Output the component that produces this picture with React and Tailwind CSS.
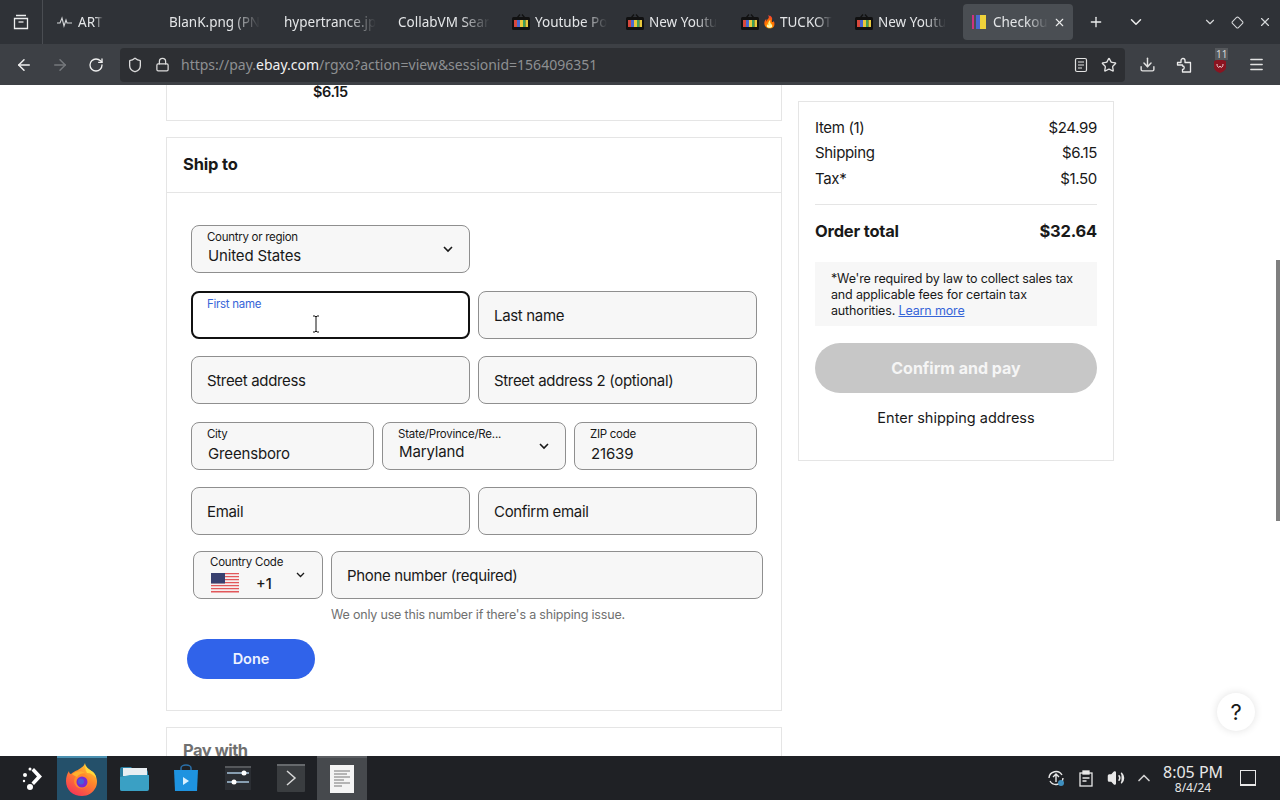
import React from "react";
import { ArrowLeft, ArrowRight, RotateCw, Shield, Lock, Star, Download, Menu, X, Plus, ChevronDown, Diamond, Volume2, ChevronUp } from "lucide-react";

const TV = () => (
  <svg width="18" height="17" viewBox="0 0 18 17" className="shrink-0">
    <path d="M5 4 L8 0.5 M13 4 L10 0.5" stroke="#111" strokeWidth="1.2" />
    <rect x="0" y="3" width="18" height="13" rx="1.5" fill="#111" />
    <rect x="2" y="6" width="3" height="7" fill="#d8483c" />
    <rect x="5" y="6" width="3" height="7" fill="#4a68d0" />
    <rect x="8" y="6" width="3" height="7" fill="#e9c93c" />
    <rect x="11" y="6" width="2.5" height="7" fill="#3fa05a" />
    <rect x="13.5" y="6" width="2.5" height="7" fill="#e9c93c" />
  </svg>
);

const Tab = ({ w, icon, text, pl = "pl-0" }) => (
  <div className={`h-9 shrink-0 flex items-center ${w}`}>
    <div className={`h-full flex items-center gap-[5px] ${pl}`}>
      {icon}
      <span className="whitespace-nowrap text-[13.5px] text-[#e4e6e8] [mask-image:linear-gradient(to_right,black_68%,transparent_100%)]">{text}</span>
    </div>
  </div>
);

const Field = ({ label, value, className = "", chevron, active, valueTop = "top-[20px]" }) => (
  <div className={`relative h-12 rounded-lg shrink-0 ${active ? "bg-white border-2 border-[#111]" : "bg-[#f7f7f7] border border-[#8f8f8f]"} ${className}`}>
    {value !== undefined || active ? (
      <>
        <div className={`absolute top-[4px] text-[11.5px] leading-[14px] tracking-[-0.025em] whitespace-nowrap ${active ? "left-[14px] top-[3px] text-[#3665d8]" : "left-[15px] text-[#191919]"}`}>{label}</div>
        {value && <div className={`absolute left-4 ${valueTop} text-[15px] leading-5 tracking-[-0.01em] text-[#191919] whitespace-nowrap`}>{value}</div>}
      </>
    ) : (
      <div className="h-full flex items-center pl-[15px] pt-[2px] text-[15px] tracking-[-0.022em] text-[#191919] whitespace-nowrap">{label}</div>
    )}
    {chevron && (
      <svg width="10" height="7" viewBox="0 0 10 7" className="absolute right-[16px] top-[20px]" fill="none" stroke="#191919" strokeWidth="1.6"><path d="M1 1l4 4 4-4" /></svg>
    )}
  </div>
);

const Row = ({ a, b }) => (
  <div className="flex justify-between text-[15px] leading-[25.5px] tracking-[-0.022em] text-[#191919]">
    <span>{a}</span>
    <span>{b}</span>
  </div>
);

const Flag = () => (
  <svg width="28" height="20" viewBox="0 0 28 20">
    {[...Array(7)].map((_, i) => <rect key={i} y={i * 3} width="28" height="1.5" fill="#e2575a" />)}
    {[...Array(6)].map((_, i) => <rect key={i} y={i * 3 + 1.5} width="28" height="1.5" fill="#f5eeee" />)}
    <rect width="14" height="10.5" fill="#38406f" />
  </svg>
);

const Firefox = () => (
  <svg width="32" height="33" viewBox="0 0 32 33">
    <defs>
      <linearGradient id="ff" x1="0.8" y1="0" x2="0.2" y2="1">
        <stop offset="0" stopColor="#ffd23a" />
        <stop offset="0.4" stopColor="#ff8a2a" />
        <stop offset="1" stopColor="#f5305a" />
      </linearGradient>
    </defs>
    <path d="M19 0c0 4 4 6 8 9 4 4 5 10 3 15-3 6-8 9-14 9C7 33 0 27 0 18c0-4 1-7 3-10 0 2 1 3 2 3 2-2 4-3 7-4 2-2 6-3 7-7z" fill="url(#ff)" />
    <path d="M19 0c0 4 4 6 8 9 2 2 3 4 3 6-2-3-5-5-9-5-2-3-2-7-2-10z" fill="#ffd83a" />
    <circle cx="15.5" cy="18" r="7.5" fill="#ff8a2a" />
    <circle cx="16" cy="19" r="5.5" fill="#7a2bd0" />
    <circle cx="15" cy="18.5" r="3" fill="#4a5fd8" />
    <path d="M6 11c4-3 9-4 13-1-3 0-6 1-8 4-2-1-4-2-5-3z" fill="#ffb02e" />
  </svg>
);

export default function App() {
  return (
    <div className="h-screen w-full overflow-hidden flex flex-col bg-white font-['Inter',sans-serif]">
      {/* Tab strip */}
      <div className="h-11 shrink-0 bg-[#2f3237] flex items-center font-['Noto_Sans',sans-serif]">
        <div className="w-[43px] h-full shrink-0 flex items-center justify-center border-r border-[#4a4d52]">
          <svg width="16" height="16" viewBox="0 0 16 16" fill="none" stroke="#eceded" strokeWidth="1.3"><path d="M3 1.5h10M1.5 4.5h13v10h-13z" /><path d="M5.5 8h5" /></svg>
        </div>
        <div className="flex items-center pl-[13px]">
          <Tab w="w-[113px]" pl="pl-[1px]" text="ART" icon={<svg width="16" height="12" viewBox="0 0 16 12" fill="none" stroke="#d5d7d9" strokeWidth="1.1"><path d="M0 7h3l2-5 2 8 2-6 1 3h5" /></svg>} />
          <Tab w="w-[115px]" text="BlanK.png (PN" />
          <Tab w="w-[114px]" text="hypertrance.jp" />
          <Tab w="w-[114px]" text="CollabVM Sear" />
          <Tab w="w-[114px]" icon={<TV />} text="Youtube Po" />
          <Tab w="w-[115px]" icon={<TV />} text="New Youtu" />
          <Tab w="w-[114px]" icon={<><TV /><span className="text-[12px] -ml-[2px] -mr-[2px]">🔥</span></>} text="TUCKOT" />
          <Tab w="w-[108px]" icon={<TV />} text="New Youtu" />
          <div className="w-[110px] h-9 shrink-0 rounded-[4px] bg-[#4a4e53] flex items-center pl-[9px] pr-[9px] gap-[5px]">
            <svg width="16" height="16" viewBox="0 0 16 16" className="shrink-0">
              <rect x="0" y="1" width="2" height="14" fill="#d0327f" />
              <rect x="4" y="1" width="4" height="14" fill="#4a68d0" />
              <rect x="8" y="1" width="6" height="14" fill="#efd23a" />
            </svg>
            <span className="flex-1 whitespace-nowrap text-[13.5px] text-[#e4e6e8] [mask-image:linear-gradient(to_right,black_60%,transparent_100%)]">Checkou</span>
            <X size={13} color="#eceded" className="shrink-0" />
          </div>
          <Plus size={16} color="#eceded" className="ml-[15px] shrink-0" />
          <ChevronDown size={18} color="#eceded" className="ml-[23px] shrink-0" />
        </div>
        <div className="ml-auto flex items-center gap-[14px] pr-[8px]">
          <ChevronDown size={14} color="#d5d7d9" />
          <Diamond size={13} color="#d5d7d9" />
          <X size={14} color="#d5d7d9" />
        </div>
      </div>

      {/* Nav bar */}
      <div className="h-[41px] shrink-0 bg-[#3d4045] flex items-center font-['Noto_Sans',sans-serif]">
        <div className="w-[120px] shrink-0 flex items-center pl-[15px] gap-[18px]">
          <ArrowLeft size={18} color="#f0f0f0" />
          <ArrowRight size={18} color="#75787c" />
          <RotateCw size={16} color="#f0f0f0" className="ml-[1px]" />
        </div>
        <div className="w-[1005px] h-[34px] shrink-0 bg-[#2d2f33] rounded-[4px] flex items-center pl-[7px] pr-[8px]">
          <Shield size={16} color="#dcdcdc" />
          <Lock size={15} color="#dcdcdc" className="ml-[12px]" />
          <span className="ml-[11px] text-[14px] text-[#8d8f92] whitespace-nowrap">https://pay.<span className="text-[#f0f0f0]">ebay.com</span>/rgxo?action=view&amp;sessionid=1564096351</span>
          <div className="ml-auto flex items-center gap-[13px]">
            <svg width="14" height="16" viewBox="0 0 14 16" fill="none" stroke="#e2e2e2" strokeWidth="1.2"><rect x="1.5" y="1.5" width="11" height="13" rx="1.5" /><path d="M4 5h6M4 8h6M4 11h4" /></svg>
            <Star size={16} color="#e2e2e2" />
          </div>
        </div>
        <div className="flex items-center pl-[14px]">
          <Download size={17} color="#e2e2e2" />
          <svg width="16" height="17" viewBox="0 0 16 17" fill="none" stroke="#ececec" strokeWidth="1.3" strokeLinejoin="round" className="ml-[20px]">
            <path d="M1.5 6.5h3.5V4.5a2 2 0 014 0v2h5.5v9.5h-8v-2.5a1.7 1.7 0 000-3.5v-1H1.5z" />
          </svg>
          <div className="relative w-4 h-4 ml-[20px] mt-[2px]">
            <svg width="16" height="16" viewBox="0 0 16 16"><path d="M8 1l6 2v6c0 3-3 5-6 6-3-1-6-3-6-6V3z" fill="#8a1420" /><path d="M5 6c0 4 2.500 4 3 2 .5 2 3 2 3-2" fill="none" stroke="#f0d8d8" strokeWidth="1" /></svg>
            <span className="absolute -top-[10px] left-[3px] text-[10px] leading-3 text-[#d8d8d8] bg-[#55585c] px-[1px]">11</span>
          </div>
          <Menu size={17} color="#e2e2e2" className="ml-[20px]" />
        </div>
      </div>

      {/* Page */}
      <div className="relative flex-1 min-h-0 overflow-hidden flex items-start pl-[166px] gap-4 bg-white">
        <div className="w-[616px] shrink-0">
          <div className="h-[36px] border border-t-0 border-[#e5e5e5] pl-[146px] text-[14.5px] font-semibold leading-[14px] tracking-[-0.03em] text-[#191919]">$6.15</div>
          <div className="mt-4 h-[574px] border border-[#e5e5e5]">
            <div className="h-[55px] flex items-center pl-4 pb-[2px] border-b border-[#e5e5e5] text-[16.5px] font-bold tracking-[-0.01em] text-[#191919]">Ship to</div>
            <div className="pl-[24px] pt-[32px]">
              <Field className="w-[279px]" label="Country or region" value="United States" valueTop="top-[20px]" chevron />
              <div className="mt-[18px] flex gap-2">
                <Field className="w-[279px]" label="First name" active />
                <Field className="w-[279px]" label="Last name" />
              </div>
              <div className="mt-[17px] flex gap-2">
                <Field className="w-[279px]" label="Street address" />
                <Field className="w-[279px]" label="Street address 2 (optional)" />
              </div>
              <div className="mt-[18px] flex gap-2">
                <Field className="w-[183px]" label="City" value="Greensboro" valueTop="top-[21px]" />
                <div className="relative h-12 w-[184px] shrink-0 rounded-lg bg-[#f7f7f7] border border-[#8f8f8f]">
                  <div className="absolute left-[15px] top-[4px] text-[11.5px] leading-[14px] tracking-[-0.02em] text-[#191919]">State/Province/Re...</div>
                  <div className="absolute left-4 top-[19px] text-[15px] leading-5 tracking-[-0.01em] text-[#191919]">Maryland</div>
                  <svg width="10" height="7" viewBox="0 0 10 7" className="absolute right-[16px] top-[20px]" fill="none" stroke="#191919" strokeWidth="1.6"><path d="M1 1l4 4 4-4" /></svg>
                </div>
                <Field className="w-[183px]" label="ZIP code" value="21639" valueTop="top-[21px]" />
              </div>
              <div className="mt-[17px] flex gap-2">
                <Field className="w-[279px]" label="Email" />
                <Field className="w-[279px]" label="Confirm email" />
              </div>
              <div className="mt-4 ml-[2px] flex gap-2">
                <div className="relative h-12 w-[130px] shrink-0 rounded-lg bg-[#f7f7f7] border border-[#8f8f8f]">
                  <div className="absolute left-4 top-[3px] text-[11.5px] leading-[14px] tracking-[-0.02em] text-[#191919]">Country Code</div>
                  <div className="absolute left-[17px] top-[21px]"><Flag /></div>
                  <div className="absolute left-[62px] top-[22px] text-[14.5px] leading-5 font-medium text-[#191919]">+1</div>
                  <svg width="9" height="6" viewBox="0 0 9 6" className="absolute right-[17px] top-[20px]" fill="none" stroke="#191919" strokeWidth="1.3"><path d="M1 1l3.500 3.500L8 1" /></svg>
                </div>
                <Field className="w-[432px]" label="Phone number (required)" />
              </div>
              <div className="mt-[8px] ml-[140px] text-[12.5px] leading-4 tracking-[-0.015em] text-[#707070]">We only use this number if there's a shipping issue.</div>
              <div className="mt-4 -ml-[4px] w-32 h-10 rounded-full bg-[#3063ea] flex items-center justify-center text-[14.5px] font-semibold text-[#eef2ff]">Done</div>
            </div>
          </div>
          <div className="mt-4 h-[60px] border border-[#e5e5e5] pl-4 pt-[12px] text-[16.5px] font-bold leading-5 tracking-[-0.03em] text-[#707070]">Pay with</div>
        </div>

        <div className="mt-4 w-[316px] h-[360px] shrink-0 border border-[#e5e5e5] p-4 pt-[12.5px]">
          <Row a="Item (1)" b="$24.99" />
          <Row a="Shipping" b="$6.15" />
          <Row a="Tax*" b="$1.50" />
          <div className="mt-[13px] border-t border-[#e5e5e5]" />
          <div className="mt-[14px] flex justify-between text-[16.5px] leading-6 font-bold tracking-[-0.012em] text-[#191919]">
            <span>Order total</span>
            <span>$32.64</span>
          </div>
          <div className="mt-[19px] h-[64px] bg-[#f7f7f7] pl-4 pr-2 pt-[9px] text-[12.5px] leading-4 tracking-[-0.012em] text-[#191919]">
            *We're required by law to collect sales tax and applicable fees for certain tax authorities. <span className="text-[#3665d8] underline">Learn more</span>
          </div>
          <div className="mt-[17px] h-[50px] rounded-full bg-[#c7c7c7] flex items-center justify-center text-[16px] font-bold text-[#f5f5f5]">Confirm and pay</div>
          <div className="mt-[15px] text-center text-[14.5px] leading-5 text-[#191919]">Enter shipping address</div>
        </div>

        {/* text cursor */}
        <svg width="8" height="18" viewBox="0 0 8 18" className="absolute left-[312px] top-[230px]" fill="none" stroke="#111" strokeWidth="1"><path d="M1 1h2l1 1 1-1h2M4 2v14M1 17h2l1-1 1 1h2" /></svg>
        {/* scrollbar thumb */}
        <div className="absolute right-0 top-[175px] w-[4px] h-[261px] bg-[#7f7f7f]" />
        {/* help */}
        <div className="absolute left-[1217px] top-[608px] w-[38px] h-[38px] rounded-full bg-white shadow-[0_0_8px_rgba(0,0,0,0.12)] flex items-center justify-center text-[22px] font-normal text-[#191919]">?</div>
      </div>

      {/* Taskbar */}
      <div className="h-11 shrink-0 bg-[#1f2125] flex items-center">
        <div className="w-[57px] h-full flex items-center justify-center pl-[9px] shrink-0">
          <svg width="28" height="28" viewBox="0 0 28 28" fill="#fff"><path d="M15 4l8 8.500-8 8.500-2.500-2.500 5.500-6-5.500-6z" /><circle cx="6" cy="11" r="2" /><circle cx="11" cy="5" r="1.500" /><circle cx="11" cy="23" r="3" /><circle cx="5" cy="17" r="1.200" /></svg>
        </div>
        <div className="w-[50px] h-full bg-[#24506a] border-t-2 border-[#4a90b0] flex items-center justify-center shrink-0"><Firefox /></div>
        <div className="w-[54px] h-full flex items-center justify-center shrink-0">
          <svg width="30" height="28" viewBox="0 0 30 28"><path d="M1 5a2 2 0 012-2h9l3 3h12a2 2 0 012 2v17a2 2 0 01-2 2H3a2 2 0 01-2-2z" fill="#2a7ea0" /><rect x="4" y="4" width="24" height="8" fill="#e8eef2" /><path d="M1 13l10-2h19v14a2 2 0 01-2 2H3a2 2 0 01-2-2z" fill="#3aa0c4" /></svg>
        </div>
        <div className="w-[50px] h-full flex items-center justify-center shrink-0">
          <svg width="26" height="28" viewBox="0 0 26 28"><path d="M8 6V4a5 3 0 0110 0v2" fill="none" stroke="#2a6fa8" strokeWidth="1.5" /><path d="M1 6h24l-1 21H2z" fill="#1e93e0" /><path d="M10 13l6 4-6 4z" fill="#d8f0ff" /></svg>
        </div>
        <div className="w-[54px] h-full flex items-center justify-center shrink-0">
          <svg width="28" height="28" viewBox="0 0 28 28"><rect x="1" y="2" width="26" height="24" fill="#2b2e33" /><rect x="1" y="2" width="26" height="2" fill="#55585c" /><path d="M3 9h22M3 18h22" stroke="#a8c4dc" strokeWidth="1.500" /><circle cx="20" cy="9" r="2.500" fill="#fff" /><circle cx="10" cy="18" r="2.500" fill="#fff" /></svg>
        </div>
        <div className="w-[52px] h-full flex items-center justify-center shrink-0">
          <svg width="28" height="28" viewBox="0 0 28 28" fill="none"><rect x="0" y="0" width="28" height="28" rx="1" fill="#3a3d40" /><rect width="28" height="2" fill="#66696c" /><path d="M10 7l8 7-8 7" stroke="#d8d8d8" strokeWidth="1.500" /></svg>
        </div>
        <div className="w-[50px] h-full bg-[#46494d] border-t-2 border-[#5a5d61] flex items-center justify-center shrink-0">
          <svg width="24" height="28" viewBox="0 0 24 28"><rect width="24" height="28" fill="#f4f4f4" /><path d="M4 6h16M4 9h13M4 12h16M4 15h10M4 18h16M4 21h8" stroke="#777" strokeWidth="1" /></svg>
        </div>
        <div className="ml-auto flex items-center font-['Noto_Sans',sans-serif]">
          <svg width="18" height="18" viewBox="0 0 18 18" fill="none" stroke="#e8e8e8" strokeWidth="1.400" className="mr-[14px]"><path d="M2 9a7 7 0 0113-3M16 9a7 7 0 01-13 3" /><path d="M9 13V6M6 8l3-3 3 3" /><circle cx="14" cy="14" r="3" fill="#3f90c0" stroke="none" /></svg>
          <svg width="14" height="17" viewBox="0 0 14 17" fill="none" stroke="#e8e8e8" strokeWidth="1.300" className="mr-[14px]"><rect x="1" y="3" width="12" height="13" /><rect x="4" y="1" width="6" height="3" fill="#e8e8e8" /><path d="M3.500 8h7M3.500 11h4" /></svg>
          <Volume2 size={18} color="#e8e8e8" fill="#e8e8e8" className="mr-[9px]" />
          <ChevronUp size={20} color="#d0d0d0" className="mr-[9px]" />
          <div className="w-[60px] text-center text-[#e8e8e8]">
            <div className="text-[16px] leading-[18px] whitespace-nowrap">8:05 PM</div>
            <div className="text-[12px] leading-[13px]">8/4/24</div>
          </div>
          <div className="ml-[17px] mr-[24px] w-4 h-4 border border-[#e8e8e8] border-b-2" />
        </div>
      </div>
    </div>
  );
}
